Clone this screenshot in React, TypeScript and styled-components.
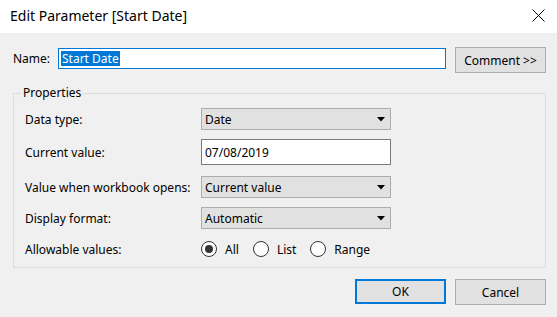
import React from "react";
import styled, { createGlobalStyle } from "styled-components";

const Global = createGlobalStyle`
  html, body { margin: 0; padding: 0; background: #f0f0f0; }
  body { font-family: "Noto Sans", "Segoe UI", sans-serif; font-size: 12px; color: #000; }
  * { box-sizing: border-box; }
`;

const Dialog = styled.div`
  width: 557px;
  height: 317px;
  background: #f0f0f0;
  display: flex;
  flex-direction: column;
`;

const TitleBar = styled.div`
  height: 33px;
  background: #fff;
  display: flex;
  align-items: center;
  justify-content: space-between;
  padding: 0 12px 0 10px;
`;

const Title = styled.div`
  font-size: 14px;
  line-height: 16px;
  padding-bottom: 2px;
`;

const Close = styled.svg`
  width: 13px;
  height: 13px;
  margin-bottom: 3px;
`;

const Body = styled.div`
  padding: 14px 11px 0 13px;
  display: flex;
  flex-direction: column;
`;

const NameRow = styled.div`
  display: flex;
  align-items: flex-start;
  height: 26px;
`;

const NameLabel = styled.label`
  width: 45px;
  line-height: 21px;
  margin-top: 1px;
`;

const NameInput = styled.div`
  flex: 1;
  height: 21px;
  margin-top: 1px;
  margin-right: 9px;
  background: #fff;
  border: 1px solid #0078d7;
  padding: 2px 2px;
  display: flex;
  align-items: center;
`;

const Selected = styled.span`
  background: #0078d7;
  color: #fff;
  line-height: 15px;
  padding: 0 1px;
`;

const Button = styled.button<{ $default?: boolean }>`
  width: 91px;
  height: ${(p) => (p.$default ? "25px" : "26px")};
  background: #e1e1e1;
  border: ${(p) => (p.$default ? "2px solid #0078d7" : "1px solid #adadad")};
  font-family: inherit;
  font-size: 12px;
  color: #000;
  padding: 0;
  margin: 0;
`;

const Group = styled.fieldset`
  margin: 12px 0 0 0;
  border: 1px solid #dcdcdc;
  padding: 7px 0 7px 11px;
`;

const Legend = styled.legend`
  padding: 0 2px;
  margin-left: -4px;
  line-height: 16px;
`;

const Grid = styled.div`
  display: grid;
  grid-template-columns: 176px 190px;
  grid-template-rows: 22px 28px 22px 22px 22px;
  row-gap: 9px;
`;

const Label = styled.div`
  display: flex;
  align-items: center;
  height: 22px;
`;

const LabelTall = styled(Label)`
  height: 26px;
`;

const Select = styled.div`
  height: 22px;
  background: #e1e1e1;
  border: 1px solid #adadad;
  display: flex;
  align-items: center;
  justify-content: space-between;
  padding: 0 5px 0 3px;
`;

const Arrow = styled.svg`
  width: 8px;
  height: 5px;
`;

const TextInput = styled.div`
  height: 26px;
  background: #fff;
  border: 1px solid #7a7a7a;
  display: flex;
  align-items: center;
  padding: 0 3px;
`;

const Radios = styled.div`
  display: flex;
  align-items: center;
  height: 22px;
`;

const RadioItem = styled.div`
  display: flex;
  align-items: center;
  margin-right: 14px;
`;

const Circle = styled.span<{ $on?: boolean }>`
  width: 16px;
  height: 16px;
  border-radius: 50%;
  border: 1px solid #333;
  background: #fff;
  display: flex;
  align-items: center;
  justify-content: center;
  margin-right: 8px;
  &::after {
    content: "";
    display: ${(p) => (p.$on ? "block" : "none")};
    width: 8px;
    height: 8px;
    border-radius: 50%;
    background: #333;
  }
`;

const Footer = styled.div`
  display: flex;
  justify-content: flex-end;
  gap: 9px;
  margin-top: 11px;
`;

const DropArrow = () => (
  <Arrow viewBox="0 0 8 5">
    <path d="M0 0 H8 L4 4.5 Z" fill="#000" />
  </Arrow>
);

export default function App() {
  return (
    <>
      <Global />
      <Dialog>
        <TitleBar>
          <Title>Edit Parameter [Start Date]</Title>
          <Close viewBox="0 0 13 13">
            <path d="M0.5 0.5 L12.5 12.5 M12.5 0.5 L0.5 12.5" stroke="#000" strokeWidth="1" fill="none" />
          </Close>
        </TitleBar>
        <Body>
          <NameRow>
            <NameLabel>Name:</NameLabel>
            <NameInput>
              <Selected>Start Date</Selected>
            </NameInput>
            <Button>Comment &gt;&gt;</Button>
          </NameRow>
          <Group>
            <Legend>Properties</Legend>
            <Grid>
              <Label>Data type:</Label>
              <Select>
                <span>Date</span>
                <DropArrow />
              </Select>
              <LabelTall>Current value:</LabelTall>
              <TextInput>07/08/2019</TextInput>
              <Label>Value when workbook opens:</Label>
              <Select>
                <span>Current value</span>
                <DropArrow />
              </Select>
              <Label>Display format:</Label>
              <Select>
                <span>Automatic</span>
                <DropArrow />
              </Select>
              <Label>Allowable values:</Label>
              <Radios>
                <RadioItem>
                  <Circle $on />
                  All
                </RadioItem>
                <RadioItem>
                  <Circle />
                  List
                </RadioItem>
                <RadioItem>
                  <Circle />
                  Range
                </RadioItem>
              </Radios>
            </Grid>
          </Group>
          <Footer>
            <Button $default>OK</Button>
            <Button>Cancel</Button>
          </Footer>
        </Body>
      </Dialog>
    </>
  );
}
